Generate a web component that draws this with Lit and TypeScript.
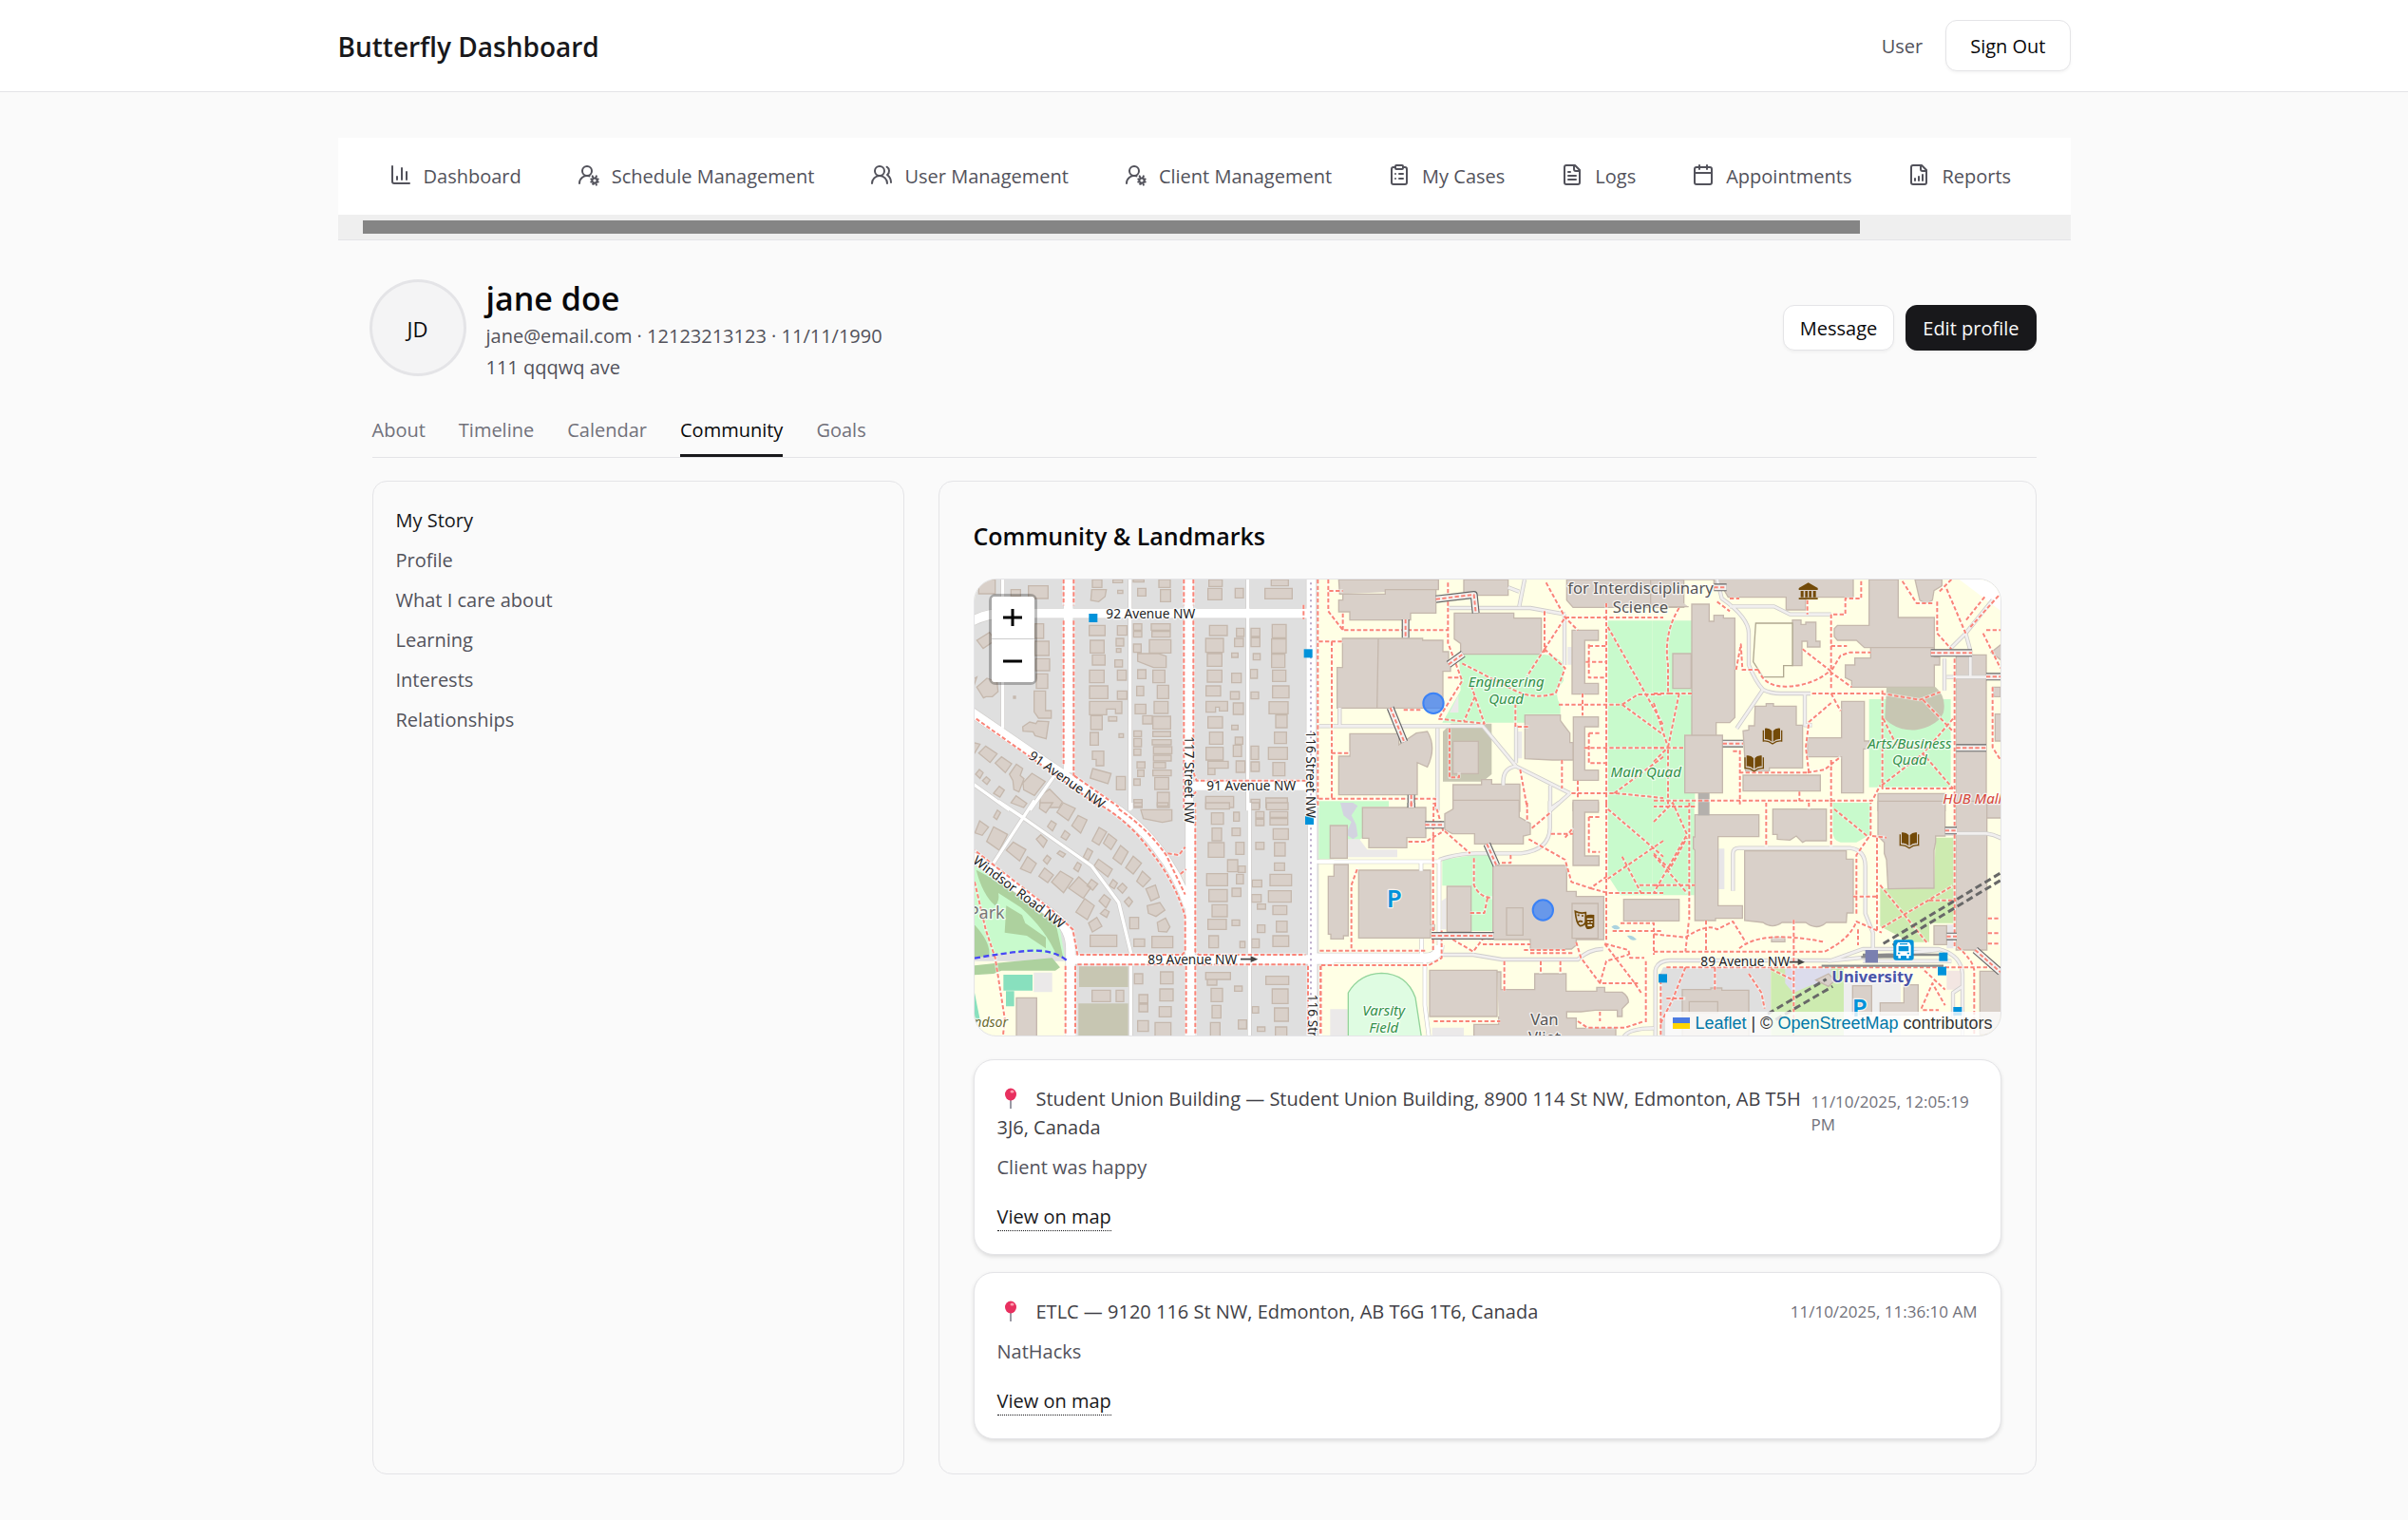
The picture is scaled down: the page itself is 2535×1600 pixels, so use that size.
import { LitElement, html, svg, css } from "lit";
import { customElement } from "lit/decorators.js";
import { classMap } from "lit/directives/class-map.js";

/* ---------- icons (24 unit grid, stroked) ---------- */

const cog = "M15.7 13.4 16.1 14.3M15.2 16.9 14.3 16.5M16.1 21.7 16.9 21.7M19.5 14.3 19.9 13.4M15.2 19.1 14.3 19.5M16.5 20.8 16.1 21.7M20.8 16.9 21.7 16.5M20.8 19.1 21.7 19.5M19.9 22.6 19.5 21.7M20.6 18a2.6 2.6 0 1 1-5.2 0 2.6 2.6 0 0 1 5.2 0Z";
const page = "M15 2H6a2 2 0 0 0-2 2v16a2 2 0 0 0 2 2h12a2 2 0 0 0 2-2V7ZM14 2v4a2 2 0 0 0 2 2h4";
const head = "M15 8A5 5 0 1 1 5 8a5 5 0 0 1 10 0Z";

const icons: Record<string, string> = {
  chart: "M3 3v16a2 2 0 0 0 2 2h16M18 17V9M13 17V5M8 17v-3",
  userCog: `${head}M2 21a8 8 0 0 1 10.434-7.62${cog}`,
  users: `${head}M18 21a8 8 0 0 0-16 0M22 20c0-3.37-2-6.5-4-8a5 5 0 0 0-.45-8.3`,
  clipboard: "M9 2h6a1 1 0 0 1 1 1v2a1 1 0 0 1-1 1H9a1 1 0 0 1-1-1V3a1 1 0 0 1 1-1ZM16 4h2a2 2 0 0 1 2 2v14a2 2 0 0 1-2 2H6a2 2 0 0 1-2-2V6a2 2 0 0 1 2-2h2M12 11h4M12 16h4M8 11h.01M8 16h.01",
  file: `${page}M10 9H8M16 13H8M16 17H8`,
  calendar: "M8 2v4M16 2v4M5 4h14a2 2 0 0 1 2 2v14a2 2 0 0 1-2 2H5a2 2 0 0 1-2-2V6a2 2 0 0 1 2-2ZM3 10h18",
  report: `${page}M8 18v-2M12 18v-4M16 18v-6`,
};

const navItems: [string, string][] = [
  ["chart", "Dashboard"], ["userCog", "Schedule Management"], ["users", "User Management"],
  ["userCog", "Client Management"], ["clipboard", "My Cases"], ["file", "Logs"],
  ["calendar", "Appointments"], ["report", "Reports"],
];
const tabs = ["About", "Timeline", "Calendar", "Community", "Goals"];
const sections = ["My Story", "Profile", "What I care about", "Learning", "Interests", "Relationships"];
const visits = [
  {
    place: "Student Union Building — Student Union Building, 8900 114 St NW, Edmonton, AB T5H 3J6, Canada",
    time: "11/10/2025, 12:05:19 PM", note: "Client was happy",
  },
  { place: "ETLC — 9120 116 St NW, Edmonton, AB T6G 1T6, Canada", time: "11/10/2025, 11:36:10 AM", note: "NatHacks" },
];

/* ---------- map tiles ---------- */

interface Tile {
  x: number; y: number;
  areas?: [string, string][];
  houses?: string;
  buildings?: string;
  wide?: string; street?: string; lane?: string; service?: string;
  walks?: string; bridges?: string;
}

/** Turns "x,y,w,h x,y,w,h" into path data. */
const boxes = (list = "") => list.trim().split(/\s+/).filter(Boolean).map((b) => {
  const [x, y, w, h] = b.split(",");
  return `M${x} ${y}h${w}v${h}h-${w}z`;
}).join("");

const QUAD = "#c8facc", YELLOW = "#ffffe5", HOMES = "#dfdfdf", PITCH = "#c7c6b2", WOOD = "#add19e", LAWN = "#cdebb0", PALE = "#ebe9e9";

const tiles: Tile[] = [
  {
    x: -15, y: -30,
    areas: [["M15 30H1100V750H15z", HOMES], ["M1100 30H1140V750H1100z", YELLOW], ["M1104 730h40v20h-40z", QUAD]],
    houses: `28,30,52,45 130,62,30,20 185,50,62,40 205,170,28,46 205,225,45,45 208,280,44,38 210,328,36,46
      387,30,30,25 452,30,30,10 467,64,16,10 377,175,50,32 380,222,44,40 387,268,40,32 378,316,46,40 378,366,58,40
      382,460,36,44 380,513,26,40 463,652,28,42 466,176,30,30 462,216,24,24 463,248,14,12 458,284,24,22 466,316,28,32
      466,382,30,26 438,463,26,14 471,517,14,12 517,170,26,20 517,194,26,18 517,234,24,26 530,58,26,24 516,30,34,8
      530,315,26,28 527,367,22,30 522,424,34,30 546,460,30,26 518,508,24,18 518,532,24,26 518,565,22,20 528,606,25,20
      530,632,20,20 518,660,20,20 518,725,26,25 597,30,36,25 602,62,32,38 573,170,60,20 575,194,58,18 567,220,68,42
      578,316,38,40 592,364,36,42 582,415,44,38 578,462,56,40 578,510,56,16 576,536,60,16 580,558,58,22 580,585,56,18
      580,608,38,18 578,632,58,18 584,655,44,38 592,702,38,48 755,30,42,22 752,58,44,36 838,58,26,30 757,175,56,32
      745,216,56,44 750,264,46,40 750,316,46,38 746,366,46,32 752,463,46,36 757,512,42,38 746,560,54,40 752,604,64,22
      752,626,22,20 745,715,88,35 842,184,24,26 836,216,28,26 827,262,20,14 827,326,30,30 823,384,28,24 832,420,32,36
      827,490,20,14 838,528,24,22 832,553,26,36 841,603,28,36 888,184,28,26 888,214,28,28 895,264,22,20 886,314,22,28
      888,385,24,22 888,556,24,42 888,606,26,30 888,724,28,26 952,30,54,20 932,58,86,33 955,172,44,42 953,218,46,44
      953,266,42,42 956,316,42,36 956,366,52,38 945,416,60,38 966,458,36,40 962,512,38,36 943,560,60,38 957,608,38,42
      935,720,68,30 138,399,6,6`,
    buildings: `M203 382h36v62h18v24h-40l-14-20zM167 495l22-15 20 5 5-8 35 2-8 54-35-10-6-12-32-2zM22 222l40-25 18 25-38 26z
      M22 370l32-28 32 12 3 30-18 16h-20l-8 4zM0 350l22-12-10 30zM385 62h46l-4 22-20 16-25-4zM378 415h102v38h-20v-14h-28v18h-54z
      M387 572h36v46h-24v-20h-12zM388 627l58 16-10 32-56-18zM530 264h66l24 8v36h-40l-50-20zM746 415h68v30h-26v-12h-12v16h-30z
      M28 578l22-22 36 24-22 28zM80 610l20-20 32 22-20 28zM125 645l22-32 20 14-8 22 12 10-16 42-16-8-3-28z
      M168 672l28-30 42 26-34 44-34-18zM222 712l30-20 40 40-10 18h-60zM75 705l18-22 16 12-14 22zM130 735l16-22 34 24-10 13z
      M10 545l22 5-18 30zM18 645l12-15 12 10-10 18zM40 665l12-12 12 10-10 14z`,
    wide: "M0 165Q50 137 110 137H1080M311 20V640M691 20V760M1078 20V760M0 445L240 610 480 768",
    street: "M700 682H1070",
    lane: "M104 30V500M506 30V760M878 30V760M270 645L190 758M0 668L125 758",
    walks: `M296 30V112M296 160V615M328 30V112M328 160V650M676 30V112M676 160V760M706 30V112M706 160V640L716 665H1060
      M1099 30V750M20 470L190 590 400 740M330 650L470 748M706 710L716 698M1054 110L1054 155`,
  },
  {
    x: 1065, y: -30,
    areas: [
      ["M20 30H1160V760H20z", YELLOW],
      ["M465 267H735Q780 270 795 300V350Q760 390 785 425V455H673V482H412L470 380z", QUAD],
      ["M935 160H1160V760H935z", QUAD],
      ["M440 485H568V645L540 668H414V510z", PITCH],
      ["M22 730H243V760H22z", QUAD],
      ["M808 243h14v56h-14zM650 510h14v85h-14zM435 450L463 395V450z", PALE],
    ],
    buildings: `M85 30H400V62H392V136H312V158H120V132H85V95H98V76H88zM98 76H232V62H392M480 30H620V80H480z
      M450 136H638V152H725V266H470V232L450 218zM97 216H350V222H414V258H432V296H438V320H414V436H80V308H97zM210 216L206 436
      M120 517H275V552L330 515 365 510Q395 560 365 622L333 608V710H85V588H120zM446 541h80v102h-80z
      M446 762V678H536V662H568V676H657V762zM673 458H785V475L796 490 815 515V545H825V600H760L673 596z
      M822 190H905V222H862V358H905V392H822zM826 464H905V495H862V632H905V664H826zM825 735h80V760h-80z
      M805 30H1175V118H825L805 95z`,
    service: `M22 493H540L645 620 815 705M645 490V610M397 500V760M605 680Q600 625 645 620M753 680V760L815 705
      M430 120H690L800 140M798 140V300M88 435V493M655 115L672 30M620 55L655 68`,
    walks: `M22 226H98M430 40V230L475 350 400 470M52 30V130L98 190H430M98 190V136M63 226V720M22 722H390V750M740 40L800 150 840 190
      M800 150H1110M735 130V260M735 250L800 150M735 250L800 310 770 390Q700 410 640 380L475 295M735 250L680 335M780 425H975
      M643 495V425M650 495H685M400 470L545 485 505 370M515 400L480 478M930 105V750M935 180L1110 490M980 425L1030 393H1110
      M980 425L1110 520M860 562H1110M955 705L1110 590M820 705H960L1110 720M875 235V340H930M875 240H930M865 290H930
      M875 515V610H930M875 515H910M840 665V720M855 390V460M790 600V690M658 630L680 750M435 500V655H465V640M290 442H345
      M62 578H120M55 66H98M430 340H470`,
    bridges: "M392 92L512 78L518 136M296 156V214M432 298L478 265M248 435L292 543M314 710V750",
  },
  {
    x: 2145, y: -30,
    areas: [
      ["M-5 30H1110V760H-5z", YELLOW],
      ["M-5 160H120V520H98V704H130V760H-5z", QUAD],
      ["M680 408H938V686H680z", QUAD],
      ["M965 30L1110 140V20z", "#ffffff"],
      ["M585 740h70v20h-80z", QUAD],
    ],
    buildings: `M-10 30H190V60H220L235 86H418V126H480V86H630V30M-10 30V116H110M120 108H175V162H190V143H220V152H256V466L240 482H197V522H120z
      M98 522H217V704H98zM60 264h58v110h-58zM438 158H465V172H480V165H512V225H525V243H485V225H468V302H438z
      M680 30H772V150H886V245H665L640 222H580L570 210V185L580 175H680zM685 245H886V275H903V300H886V370H625V350L605 340V300L635 300V278H685z
      M825 30H910V50L885 65 880 95Q860 110 840 95zM320 430H355V422H378V430H450V490H470V625H365V635H290L282 508 300 505V492H318z
      M282 648H526V698H282zM593 415H665V540H680V565H662V704H593V590H485V530H593zM955 268H1050V760H955zM1110 225V295L1065 260z
      M1070 370H1095V400H1075zM1078 455h20v85h-20zM708 706h212v54H708z`,
    service: `M200 30L215 90Q300 150 300 200V300Q320 350 345 378L262 500M240 115H380L430 140H560M345 378Q370 390 400 390H495
      M477 390V490H500M1070 95L985 200 935 250M985 200L1000 255V335M918 380V280M925 338H1050`,
    walks: `M470 250L560 320 590 270 620 260H685M560 140V380M560 240H610M330 315Q350 370 420 368 500 365 555 320L625 370
      M500 390H720L840 410 905 385M560 390L590 445M560 420L490 480 480 560 490 640M485 640L540 630 590 590M270 640H490M560 600V740
      M272 570V740M250 572H275M0 728H690L715 680M722 380V690H950M720 680L850 580 945 690M850 410L945 510M945 470L850 580
      M725 470L770 560H850M950 280V750M895 100V200L940 250M925 60L985 200M1045 85L985 160M1050 190H1095M1040 200L1095 310
      M1070 370V560L1095 600M655 35V90H605V140H565M485 95V140M785 35L830 105H885M260 315L275 235 280 315H330
      M80 120Q30 200 45 300V390H120M0 390H60M80 390L45 560V750M0 420L45 560M0 562H95M0 605L45 560M460 700V730M200 100L240 130
      M240 90H270M940 30L900 70M1000 180L1090 80`,
    bridges: "M875 262H1005M1050 337H1095M218 548H282M955 562H1050M190 55H230",
  },
  {
    x: -15, y: 705,
    areas: [
      ["M15 10H1104V740H15z", HOMES], ["M1104 10H1150V175H1104z", QUAD], ["M1110 190H1150V740H1110z", YELLOW],
      ["M0 190L100 255 220 330 285 400 300 490Q200 455 0 490z", QUAD],
      ["M20 212L100 255 200 320 270 375 295 490 275 485Q240 400 160 330L90 285Q95 310 80 325 40 290 20 212z", WOOD],
      ["M115 325L165 355 175 380 240 425V460L180 420 110 410z", WOOD],
      ["M0 370Q70 440 60 485L0 490z", WOOD],
      ["M0 500H318V740H0z", YELLOW],
      ["M0 515L100 505 260 490 285 520 270 530H100L75 540 0 545z", WOOD],
      ["M106 543h92v50h-92zM114 595h26v48h-26zM10 575l22 110-22 0z", "#88e0be"],
      ["M202 536h58v62h-58z", PALE],
      ["M345 517H500V582H345zM343 634H500V740H343z", PITCH],
      ["M683 220L650 225 683 290z", "#ece6e0"],
    ],
    houses: `745,0,75,20 763,32,38,36 765,80,30,40 753,126,50,46 814,180,32,38 748,224,66,38 755,274,58,38 765,322,48,38
      752,368,58,32 755,420,30,38 833,30,18,28 828,80,26,24 840,125,26,38 848,200,22,20 842,226,22,30 828,270,28,26
      828,370,24,18 853,438,16,20 888,0,26,22 903,28,26,20 903,52,26,20 903,125,26,22 892,244,30,22 890,290,30,24
      908,320,26,16 908,386,24,24 890,430,24,28 937,0,68,22 948,28,56,18 948,50,56,20 958,82,48,34 962,126,34,42
      962,190,32,24 948,226,68,36 943,278,72,36 957,325,44,28 968,374,34,34 957,420,50,34 745,536,78,22 750,558,30,18
      762,586,36,42 765,640,28,40 760,694,30,46 836,579,24,16 848,686,26,28 892,644,20,20 908,708,24,14 935,548,72,26
      955,588,50,46 962,648,44,42 965,708,36,32 386,592,58,36 462,592,24,36 520,540,26,32 602,534,40,38 600,588,42,38
      534,606,28,26 534,636,28,24 530,688,34,34 598,644,38,32 585,694,50,46 380,418,84,36 575,422,66,36 518,430,34,24
      505,362,28,36 147,616,64,124 518,0,26,12 592,0,34,10`,
    buildings: `M540 22h98v34l-30 6-60-12zM53 122l22-46 44 24-26 50zM16 95l15-38 28 20-20 26zM115 150l22-26 40 24-20 36z
      M160 208l22-38 28 22-18 30zM75 45l12-22 10 8-12 22zM222 0h40l-22 32-20-14zM275 30l20-30 38 18-22 38z
      M322 72l20-32 28 14-20 42zM245 75l12-18 16 10-12 22zM288 108l12-20 16 12-12 18zM210 115l14-14 20 18-12 22z
      M232 182l12-16 12 10-12 18zM328 208l12-20 12 8-10 22zM358 172l14-28 16 10-14 28zM276 160l8-8 18 10-8 10z
      M386 120l22-42 24 14-24 42zM422 128l16-30 26 20-18 30zM452 175l24-40 24 20-22 40zM492 205l24-36 26 22-26 34z
      M527 248l18-32 26 24-24 26zM556 272l30-12 12 38-26 12zM560 325l40-10 16 24-28 20-24-10zM592 378l26-14 14 28-10 16-26-2z
      M258 250l28-34 40 24-30 44zM218 232l18-26 28 22-18 24zM312 270l32-36 38 34-24 34zM335 345l28-42 30 22-22 44z
      M375 380l26-18 16 28-30 18zM408 310l16-20 20 16-14 26zM392 200l14-22 44 32-14 24zM466 270l16-16 14 14-14 18z
      M488 312l14-14 12 14-12 16zM412 350l14-14 14 8-8 18zM440 262l12-20 14 12-10 18zM370 262l14-20 20 14-16 20z`,
    wide: `M415 -10Q520 50 590 140 660 230 692 330M0 165L150 270 270 360Q318 400 318 460V745M318 495H1150M696 0V745M1082 0V745`,
    lane: "M90 -5L165 45 385 200 470 315 510 480M204 -8L75 190M510 0V20M508 495V745M883 0V745M508 0V22M1100 186H1150",
    walks: `M400 0Q500 55 565 145 650 250 680 360V470L670 480H340L325 400 260 340 15 150M470 20Q560 80 620 165L680 290
      M712 0V470L722 480H1060M340 511H680M712 511H1060M302 515V735M333 515V735M683 515V735M712 515V735M1068 515V735M1108 515V735
      M625 160L660 165 680 140M665 225L683 210M15 250L50 400 80 490 110 680 105 735`,
  },
  {
    x: 1065, y: 705,
    areas: [
      ["M22 10H1160V740H22z", YELLOW],
      ["M22 0H243V12H160V110L60 178H22z", QUAD],
      ["M935 0H1160V292H975L935 230z", QUAD],
      ["M412 180L512 165H572V405H503V262H412z", QUAD],
      ["M90 0L100 40 125 60 108 100 130 115 145 105 140 70 125 40 145 10 130 0z", "#d3d3e0"],
      ["M112 115H150L175 148H270V172H112zM58 652h55v90H58zM380 710h100v30H380zM410 310l15-10v100h-15z", PALE],
      ["M946 392q14-14 28 4-14 10-28-4zM996 420q16-4 30 12-18 8-30-12z", "#aad3df"],
    ],
    buildings: `M58 72H112V175H58zM160 15H360V110H300V142H180V112H160zM70 195H115V420H100V430H60V415H52V232H70z
      M148 213H375V385H388V400H375V427H148zM427 264H503V408H427zM446 -8H655V45L690 65V100L668 105V130H514V98H444L420 85V35L446 20z
      M572 198H805V280H835V296H922V432H835V450L820 462H690V432H572zM615 332h52v86h-52zM822 318h82v110h-82z
      M985 305H1160V373H985zM372 529H585V675H372zM825 -8h80v38h-43V168h45v30h-82z
      M585 534H597V590H704V540H803V595H900V583H925V598H980Q1000 610 1000 630L980 650V675H965V655H895L850 660H805V680H835V712H960V742H512V700H590V675`,
    wide: "M10 490H360Q402 488 402 450",
    street: "",
    lane: "M10 186H400M402 180V470M347 430V490M345 190V215M357 490V640L370 742",
    service: `M402 180Q460 160 520 160H660Q750 150 752 80V-5M410 480H510L600 495H840Q880 460 920 462M752 20L780 0
      M985 740Q1000 712 1080 712`,
    walks: `M125 460V260L145 205M25 467H360M30 513H370L410 490V400M383 465V130L385 0M305 123H360L415 90 395 20M420 90L500 160
      M512 175V260Q530 300 570 300M500 348H545L555 300M600 190H628V165M445 432L510 470 540 430H575M540 447H690M670 465H800
      M690 475H830M608 500V595M723 500V540M785 500V540M385 690H595M685 115L800 180 820 250 880 270 935 230M880 270L935 285H1110
      M680 0V60M695 80L755 30M755 98H825M800 110L825 80M875 45V155H910M875 45H910M930 0V440M935 20L1110 170M1110 120L935 240
      M980 170L1040 285M1035 260H1110M835 440L850 490 910 570H1030M910 570L930 500 1000 480M925 445L1000 465 1005 490H1050
      M925 445L1020 570 1040 600M1055 500V700M840 690L870 710H990L1050 690M910 660V690M950 405H1110M975 380H1080V480M28 515V735`,
    bridges: "M358 70H418M378 420H575M553 130L583 198M314 0V15",
  },
  {
    x: 2145, y: 705,
    areas: [
      ["M-5 10H1110V740H-5z", YELLOW],
      ["M-5 10H128V292H-5z", QUAD],
      ["M565 0H685V100L640 125H590Q565 120 565 90z", QUAD],
      ["M715 270H885L890 110H950V380H870V440H810L715 390z", LAWN],
      ["M30 520H370V740H20V540z", HOMES],
      ["M370 520H600V740H370z", LAWN],
      ["M415 522H560V560L500 575 440 600 415 570z", "#dcdcec"],
      ["M600 545H780V740H600z", "#eeeeee"],
      ["M205 145h18v128h-18zM925 385h25v75h-25z", "#e8e6e8"],
      ["M925 530h45v60h-45z", "#f3e6e2"],
    ],
    buildings: `M130 38H332V107H203V325H280V365H195V372H130V150L125 145V108H130zM376 20H545V120H480L470 125 450 105 430 118 390 115V100H376z
      M287 152H608V178H630V348H610L608 378H545Q515 405 480 378H405Q375 400 345 378L287 372zM708 -5H920V105H890V125L885 150V270H845L740 272 735 180 728 160V125L708 105z
      M955 -5H1052V465H955zM1052 -5H1110V48H1052zM90 590H180V585H215V592H300V740H90zM112 628h90v35h-90z
      M715 632H790V575H835V670H715zM885 388h40v60h-40zM1030 532h70v200h-70zM372 425h42v14h-42zM512 560l40-20 20 20-20 20z
      M628 578h60v90h-60z`,
    service: `M250 278V160Q250 143 270 143H620Q668 150 668 200V350L692 410V460M920 97H1050Q1080 100 1110 120M945 680V600L975 580
      M5 742V530Q10 500 50 498H560L660 462H900Q970 480 975 540V740M550 500L900 465M660 500H940`,
    walks: `M112 0V370M130 12H0M0 60L60 0 105 100 0 285M0 160L50 210 105 110M0 165L105 285M0 260H130M355 0V140M560 0V140M490 0V20
      M640 350V165L685 100V0M690 105L735 110M570 20L680 110M705 110V410M715 260L865 445M720 395L945 262M870 308H955M630 296H705
      M0 415L100 425Q170 380 200 400L250 375 290 440M110 380L100 470M165 372V470M0 470H540Q620 430 640 375L720 410
      M270 460Q340 400 540 440M645 400V450M442 370V735M40 520H1095M22 540V735M40 618H100M193 520V590M300 540L340 600 350 650
      M370 525L440 560M100 520L60 620 20 700M845 650L880 570 920 640M1055 365H1095M1055 412H1095M1055 445H1095M850 655H900
      M950 0V460M960 455Q1010 500 1012 530V735M855 530L920 590`,
    bridges: "M920 88H957M925 422H957M1015 465L1095 535",
  },
];

const layer = (cls: string, pick: (t: Tile) => string | undefined) => svg`${tiles.map((t) => {
  const d = pick(t);
  return d ? svg`<path class=${cls} transform="translate(${t.x} ${t.y})" d=${d}></path>` : null;
})}`;

const book = (x: number, y: number) => svg`<g transform="translate(${x} ${y})">
  <path fill="#734a08" d="M-24-24Q-10-26-2-16V18Q-12 8-24 10zM24-24Q10-26 2-16V18Q12 8 24 10z"></path>
  <path fill="none" stroke="#734a08" stroke-width="4" d="M-29-18V16Q-14 14 0 25 14 14 29 16V-18"></path></g>`;

const stops: [number, number][] = [[361, 108], [1040, 220], [1044, 747], [2160, 1246], [3046, 1178], [3042, 1223], [3091, 1350]];

const mapArt = svg`
  ${tiles.map((t) => svg`<g transform="translate(${t.x} ${t.y})">${(t.areas ?? []).map(([d, fill]) => svg`<path d=${d} fill=${fill}></path>`)}</g>`)}
  <path d="M1180 1450V1305Q1215 1245 1285 1243 1365 1245 1392 1320L1412 1450z" fill="#dffce2" stroke="#92d49a" stroke-width="4"></path>
  ${layer("bld", (t) => boxes(t.houses) + (t.buildings ?? ""))}
  <path class="plot" d="M2467 138H2583V272H2555V308H2490L2459 260z"></path>
  <path d="M2880 340H3035Q3070 370 3060 420 3045 460 2975 475 2915 480 2875 440z" fill="#c7c6b2"></path>
  <path d="M2285 675h36v70h-36z" fill="#b4b0ac"></path>
  ${layer("service-edge", (t) => t.service)}
  ${layer("lane-edge", (t) => t.lane)}
  ${layer("wide-edge", (t) => t.wide)}
  ${layer("street", (t) => t.street)}
  ${layer("service", (t) => t.service)}
  ${layer("lane", (t) => t.lane)}
  ${layer("wide", (t) => t.wide)}
  <path class="dots" d="M1062 10V1440"></path>
  ${layer("walk-edge", (t) => t.walks)}
  ${layer("walk", (t) => t.walks)}
  ${layer("bridge-edge", (t) => t.bridges)}
  ${layer("bridge", (t) => t.bridges)}
  ${layer("walk", (t) => t.bridges)}
  <path class="cycle" d="M0 1196Q85 1180 165 1173T290 1202"></path>
  <path class="tunnel" d="M2505 1372L2690 1262M2530 1390L2710 1285M2870 1150L3240 927M2900 1155L3240 950"></path>
  <path class="rail" d="M2805 1185H3060M2675 1220H3060M2800 1192H2920"></path>

  ${stops.map(([x, y]) => svg`<rect x=${x} y=${y} width="27" height="27" fill="#0092da"></rect>`)}
  <rect x="2813" y="1170" width="40" height="40" fill="#7a80b0"></rect>
  <g transform="translate(2902 1138)">
    <rect width="64" height="64" rx="8" fill="#0092da"></rect>
    <path fill="#fff" fill-rule="evenodd" d="M14 8h36l5 10v32h-6v8h-8v-8H23v8h-8v-8H9V18zM16 20v16h32V20zM14 40v5h7v-5zM43 40v5h7v-5zM20 11v4h24v-4z"></path>
  </g>
  <path fill="#734a08" d="M2603 27L2633 10 2663 27V33H2603zM2609 36h9v20h-9zM2623 36h8v20h-8zM2635 36h8v20h-8zM2648 36h9v20h-9zM2603 58h60v5h-60z"></path>
  ${book(2520, 494)}${book(2462, 580)}${book(2952, 823)}
  <path fill="none" stroke="#734a08" stroke-width="5" d="M1897 1048q15 8 33 4v30q-6 12-18 12-12-8-15-46zM1904 1060h6M1917 1062h6M1906 1082q8-6 14 0"></path>
  <path fill="#734a08" d="M1928 1062q12-6 29-3v38q-12 10-24 6-8-10-5-22z"></path>
  <path stroke="#fff" stroke-width="4" d="M1934 1072h18M1936 1082h6M1946 1082h6M1936 1092h14"></path>
  <path class="arrow" d="M840 1199H880M2572 1208H2610"></path>
  <path fill="#444" d="M872 1189L895 1199 872 1209zM2600 1198L2622 1208 2600 1218z"></path>

  <g class="road-name">
    <text x="415" y="122">92 Avenue NW</text>
    <text x="733" y="666">91 Avenue NW</text>
    <text x="547" y="1215">89 Avenue NW</text>
    <text x="2293" y="1222">89 Avenue NW</text>
    <text transform="translate(663 495) rotate(90)">117 Street NW</text>
    <text transform="translate(1048 478) rotate(90)">116 Street NW</text>
    <text transform="translate(1052 1310) rotate(90)">116 Street NW</text>
    <text transform="translate(168 563) rotate(35)">91 Avenue NW</text>
    <text transform="translate(-8 893) rotate(37)">Windsor Road NW</text>
  </g>
  <g class="area-name">
    <text x="1679" y="340">Engineering</text><text x="1679" y="393">Quad</text>
    <text x="2120" y="625">Main Quad</text>
    <text x="2953" y="533">Arts/Business</text><text x="2953" y="585">Quad</text>
    <text x="1292" y="1377">Varsity</text><text x="1292" y="1430">Field</text>
  </g>
  <g class="place-name">
    <text x="2103" y="46">for Interdisciplinary</text><text x="2103" y="104">Science</text>
    <text x="1800" y="1408">Van</text><text x="1800" y="1463">Vliet</text>
    <text class="park" x="38" y="1071">Park</text>
  </g>
  <text class="school" x="105" y="1412">Windsor</text>
  <text class="mall" x="3058" y="708">HUB Mall</text>
  <text class="station" x="2835" y="1272">University</text>
  <text class="parking" x="1325" y="1034">P</text>
  <text class="parking" x="2795" y="1380">P</text>

  <circle class="pin" cx="1449" cy="391" r="32"></circle>
  <circle class="pin" cx="1795" cy="1044" r="32"></circle>
`;

@customElement("community-map")
export class CommunityMap extends LitElement {
  static styles = css`
    :host { display: block; position: relative; overflow: hidden; border: 1px solid #e4e4e7; border-radius: 24px; background: #ffffe5; }
    .canvas { display: block; width: 100%; height: 480px; }
    .bld { fill: #d9d0c9; stroke: #c5b8ad; stroke-width: 4; }
    .plot { fill: #ffffe5; stroke: #b0a890; stroke-width: 4; }
    .service-edge, .lane-edge, .wide-edge, .service, .lane, .wide, .street, .walk, .walk-edge, .bridge, .bridge-edge, .dots, .cycle, .tunnel, .rail, .arrow { fill: none; stroke-linejoin: round; }
    .wide-edge { stroke: #d2d0ce; stroke-width: 33; }
    .wide { stroke: #fff; stroke-width: 29; }
    .street { stroke: #fff; stroke-width: 27; }
    .lane-edge { stroke: #cfcdcb; stroke-width: 14; }
    .lane { stroke: #fff; stroke-width: 10; }
    .service-edge { stroke: #cfcdcb; stroke-width: 13; }
    .service { stroke: #f1efef; stroke-width: 8; }
    .walk-edge { stroke: #fff; stroke-opacity: 0.5; stroke-width: 10; }
    .walk { stroke: #fa8478; stroke-width: 6; stroke-dasharray: 13 7; }
    .bridge-edge { stroke: #666; stroke-width: 24; }
    .bridge { stroke: #f3f0ee; stroke-width: 17; }
    .dots { stroke: #b9a9c8; stroke-width: 6; stroke-dasharray: 6 12; }
    .cycle { stroke: #4747f5; stroke-width: 7; stroke-dasharray: 18 10; }
    .tunnel { stroke: #686868; stroke-width: 9; stroke-dasharray: 22 12; }
    .rail { stroke: #8a8a8a; stroke-width: 7; }
    .arrow { stroke: #444; stroke-width: 5; }
    text { font-family: "Noto Sans", "Open Sans", sans-serif; font-size: 42px; paint-order: stroke; stroke: rgba(255, 255, 255, 0.7); stroke-width: 8; stroke-linejoin: round; }
    .road-name { fill: #222; }
    .road-name text { font-size: 41px; }
    .area-name { fill: #34914a; font-style: italic; text-anchor: middle; }
    .area-name text { font-size: 45px; }
    .place-name { fill: #555; text-anchor: middle; }
    .place-name text { font-size: 50px; }
    .place-name .park { fill: #777; font-size: 54px; }
    .school { fill: #6b6b2e; font-style: italic; text-anchor: end; }
    .mall { fill: #d6453a; font-style: italic; font-size: 45px; }
    .station { fill: #4a55a8; font-weight: 700; font-size: 50px; text-anchor: middle; }
    .parking { fill: #0092da; font-size: 78px; font-weight: 600; text-anchor: middle; }
    .pin { fill: #3b82f6; fill-opacity: 0.72; stroke: #3b82f6; stroke-width: 6; }

    .zoom { position: absolute; top: 15px; left: 15px; display: flex; flex-direction: column; border: 3px solid rgba(0, 0, 0, 0.25); border-radius: 7px; background-clip: padding-box; }
    .zoom button { box-sizing: border-box; display: grid; place-items: center; width: 45px; height: 45px; padding: 0; border: 0; background: #fff; color: #000; cursor: pointer; }
    .zoom button:first-child { border-bottom: 1px solid #ccc; border-radius: 3px 3px 0 0; }
    .zoom button:last-child { border-radius: 0 0 3px 3px; }
    .zoom svg { width: 20px; height: 20px; fill: none; stroke: currentColor; stroke-width: 3; }
    .credit { position: absolute; right: 0; bottom: 0; padding: 0 8px; background: rgba(255, 255, 255, 0.8); color: #333; font: 18px/25px "Liberation Sans", Arial, sans-serif; }
    .credit a { color: #0078a8; text-decoration: none; }
    .flag { width: 18px; height: 12px; }
  `;
  render() {
    return html`
      <svg class="canvas" viewBox="0 0 3240 1440" preserveAspectRatio="xMidYMid slice" role="img" aria-label="Map">${mapArt}</svg>
      <div class="zoom">
        <button aria-label="Zoom in"><svg viewBox="0 0 20 20"><path d="M0 10H20M10 1V19"></path></svg></button>
        <button aria-label="Zoom out"><svg viewBox="0 0 20 20"><path d="M0 10H20"></path></svg></button>
      </div>
      <div class="credit">
        <a href="#leaflet"><svg class="flag" viewBox="0 0 18 12"><path fill="#4c7be1" d="M0 0h18v6H0z"></path><path fill="#ffd500" d="M0 6h18v6H0z"></path></svg> Leaflet</a>
        | © <a href="#osm">OpenStreetMap</a> contributors
      </div>`;
  }
}

@customElement("app-root")
export class AppRoot extends LitElement {
  static styles = css`
    :host { display: block; min-height: 100vh; background: #fafafa; color: #18181b; font: 20px/30px "Open Sans", "Noto Sans", sans-serif; }
    * { box-sizing: border-box; }
    h1, h2, p, ul { margin: 0; padding: 0; }
    ul { list-style: none; }
    a { color: inherit; text-decoration: none; }
    .wrap { max-width: 1824px; margin: 0 auto; }
    .top { border-bottom: 1px solid #e4e4e7; background: #fff; }
    .top .wrap { display: flex; align-items: center; justify-content: space-between; height: 96px; }
    .brand { padding-top: 2px; font-size: 28px; line-height: 42px; font-weight: 600; }
    .account { display: flex; align-items: center; gap: 24px; color: #52525b; }
    .account span { padding-top: 2px; }
    .btn { height: 48px; padding: 2px 17px 0; border: 1px solid #e4e4e7; border-radius: 12px; background: #fff; color: #09090b; font: inherit; box-shadow: 0 2px 3px rgba(0, 0, 0, 0.04); cursor: pointer; }
    .btn.large { height: 54px; padding: 2px 25px 0; }
    .btn.dark { border-color: #18181b; background: #18181b; color: #fafafa; }

    .main { padding: 48px 0; }
    .nav { border-bottom: 1px solid #e4e4e7; background: #fff; overflow: hidden; }
    .nav ul { display: flex; gap: 11px; padding: 0 30px; }
    .nav a { display: flex; align-items: center; gap: 12px; height: 81px; padding: 0 24px; color: #52525b; white-space: nowrap; }
    .icon { flex: none; width: 24px; height: 24px; margin-bottom: 4px; fill: none; stroke: currentColor; stroke-width: 2; stroke-linecap: round; stroke-linejoin: round; }
    .track { display: grid; grid-template-columns: 26fr 1576fr 222fr; height: 26px; padding: 6px 0; background: #efefef; }
    .thumb { grid-column: 2; background: #858585; }

    .content { padding: 0 36px; }
    .profile { display: flex; align-items: center; gap: 24px; padding: 34px 0 22px; }
    .avatar { display: grid; place-items: center; width: 96px; height: 96px; padding-top: 2px; border-radius: 50%; background: #f4f4f5; box-shadow: 0 0 0 3px #e4e4e7; color: #09090b; font-size: 22px; }
    .who { flex: 1; padding-top: 6px; color: #52525b; line-height: 33px; }
    .who h1 { margin-bottom: 2px; color: #09090b; font-size: 34px; line-height: 42px; font-weight: 600; }
    .actions { display: flex; gap: 12px; }
    .tabs { display: flex; gap: 35px; border-bottom: 1px solid #e4e4e7; }
    .tabs a { padding: 13px 0 10px; border-bottom: 3px solid transparent; color: #71717a; }
    .tabs .on { border-color: #18181b; color: #09090b; }

    .cols { display: grid; grid-template-columns: repeat(12, 1fr); gap: 36px; margin-top: 24px; }
    .panel { border: 1px solid #e4e4e7; border-radius: 15px; }
    .side { grid-column: span 4; padding: 26px 24px; }
    .side ul { display: grid; gap: 12px; color: #52525b; }
    .side .on { color: #18181b; }
    .body { grid-column: span 8; padding: 36px; }
    .body h2 { color: #09090b; font-size: 25px; line-height: 42px; font-weight: 600; }
    community-map { box-sizing: content-box; margin: 24px 0; }
    .visits { display: grid; gap: 18px; }
    .card { padding: 26px 24px 24px; border: 1px solid #e4e4e7; border-radius: 21px; background: #fff; box-shadow: 0 2px 4px rgba(0, 0, 0, 0.12); }
    .row { display: flex; align-items: center; justify-content: space-between; }
    .place { color: #3f3f46; }
    .pin { width: 29px; height: 24px; margin-right: 12px; vertical-align: -4px; }
    time { color: #71717a; font-size: 17px; line-height: 24px; }
    .note { margin: 12px 0 22px; color: #52525b; }
    .view { display: inline-block; height: 30px; border-bottom: 1px dotted #18181b; }
  `;
  render() {
    return html`
      <header class="top"><div class="wrap">
        <div class="brand">Butterfly Dashboard</div>
        <div class="account"><span>User</span><button class="btn large">Sign Out</button></div>
      </div></header>
      <main class="main wrap">
        <nav class="nav">
          <ul>${navItems.map(([icon, label]) => html`<li><a href="#">
            <svg class="icon" viewBox="0 0 24 24" aria-hidden="true"><path d=${icons[icon]}></path></svg>${label}</a></li>`)}</ul>
          <div class="track"><div class="thumb"></div></div>
        </nav>
        <div class="content">
          <section class="profile">
            <div class="avatar">JD</div>
            <div class="who">
              <h1>jane doe</h1>
              <p>jane@email.com · 12123213123 · 11/11/1990</p>
              <p>111 qqqwq ave</p>
            </div>
            <div class="actions"><button class="btn">Message</button><button class="btn dark">Edit profile</button></div>
          </section>
          <nav class="tabs">${tabs.map((t) => html`<a href="#" class=${classMap({ on: t === "Community" })}>${t}</a>`)}</nav>
          <div class="cols">
            <aside class="panel side">
              <ul>${sections.map((s, i) => html`<li><a href="#" class=${classMap({ on: i === 0 })}>${s}</a></li>`)}</ul>
            </aside>
            <section class="panel body">
              <h2>Community &amp; Landmarks</h2>
              <community-map></community-map>
              <div class="visits">${visits.map((v) => html`
                <article class="card">
                  <div class="row">
                    <div class="place"><svg class="pin" viewBox="0 0 29 24" aria-hidden="true">
                      <path d="M14 12V23" stroke="#9a9aa5" stroke-width="2"></path>
                      <ellipse cx="14" cy="8" rx="6" ry="6.5" fill="#e8305f"></ellipse>
                      <ellipse cx="15.5" cy="5" rx="2" ry="1.5" fill="#ff9db0"></ellipse></svg>${v.place}</div>
                    <time>${v.time}</time>
                  </div>
                  <p class="note">${v.note}</p>
                  <a class="view" href="#map">View on map</a>
                </article>`)}
              </div>
            </section>
          </div>
        </div>
      </main>`;
  }
}
